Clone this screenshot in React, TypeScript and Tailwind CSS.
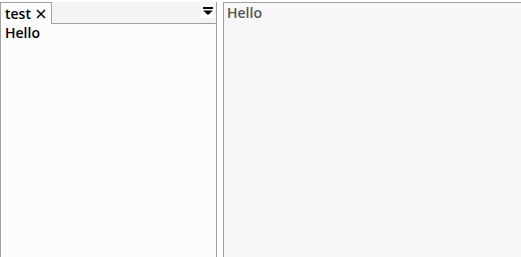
import React from "react";

export default function App() {
  const font = { fontFamily: '"Open Sans", "Noto Sans", Arial, sans-serif' };
  return (
    <div className="w-[521px] h-[257px] bg-white flex pt-[2px] overflow-hidden" style={font}>
      <div className="w-[217px] h-full flex flex-col">
        <div className="h-[22px] flex shrink-0">
          <div className="w-[52px] h-[22px] bg-white border-l border-t border-r border-[#a0a0a0] flex items-center pl-[4px] gap-[5px]">
            <span className="text-[14px] font-semibold text-black leading-none">test</span>
            <svg width="10" height="10" viewBox="0 0 10 10">
              <path d="M1 1 L9 9 M9 1 L1 9" stroke="black" strokeWidth="1.5" />
            </svg>
          </div>
          <div className="flex-1 bg-[#f4f4f4] border-b border-r border-[#a0a0a0] flex items-start justify-end pr-[2px] pt-[2px]">
            <div className="w-[13px] h-[14px] bg-white flex items-center justify-center">
              <svg width="10" height="8" viewBox="0 0 10 8">
                <rect x="0" y="0" width="10" height="2" fill="black" />
                <path d="M0 3.5 L10 3.5 L5 8 Z" fill="black" />
              </svg>
            </div>
          </div>
        </div>
        <div className="flex-1 bg-[#fcfcfc] border-l border-r border-[#a0a0a0] px-[4px]">
          <div className="text-[14px] font-semibold text-black leading-[17px]">Hello</div>
        </div>
      </div>
      <div className="w-[6px] bg-white" />
      <div className="flex-1 h-full bg-[#f7f7f7] border-l border-t border-[#a0a0a0] px-[3px] pt-[1px]">
        <div className="text-[14px] font-semibold text-[#555555] leading-[17px]">Hello</div>
      </div>
    </div>
  );
}
